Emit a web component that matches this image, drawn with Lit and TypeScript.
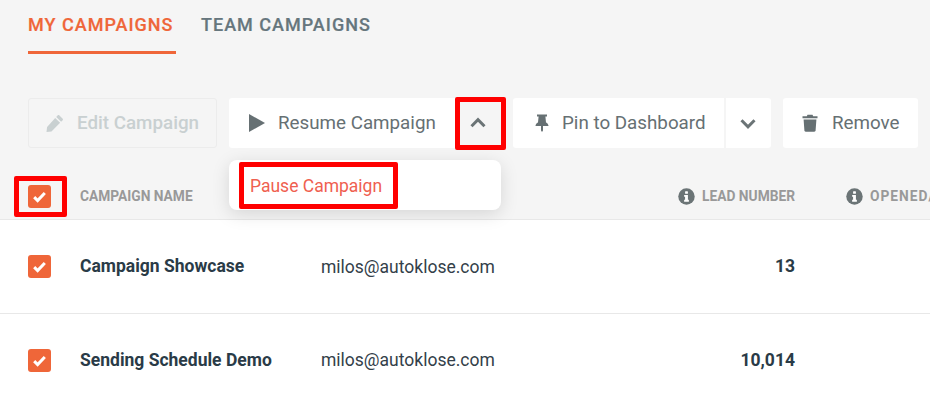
import { LitElement, html, css } from "lit";
import { customElement } from "lit/decorators.js";

const check = html`<span class="cb"><svg viewBox="0 0 24 24" width="15" height="15"><path d="M3.500 13 9 18.500 20.500 6.500" fill="none" stroke="#fff" stroke-width="4.800"/></svg></span>`;
const info = html`<svg class="info" viewBox="0 0 18 18" width="17" height="17"><circle cx="9" cy="9" r="8.700" fill="#6b7476"/><rect x="7.500" y="3.400" width="3" height="2.700" rx=".6" fill="#fff"/><path d="M6.500 7.300h4v5.200h1v2H6.500v-2h1V9.300h-1z" fill="#fff"/></svg>`;
const chevron = (up: boolean) => html`<svg viewBox="0 0 18 18" width="18" height="18"><path d="${up ? "M2.500 12.200 9 5.700 15.500 12.200" : "M2.500 6.300 9 12.800 15.500 6.300"}" fill="none" stroke="#6b7476" stroke-width="3"/></svg>`;

@customElement("app-root")
export class AppRoot extends LitElement {
  static styles = css`
    :host { display: block; width: 930px; height: 406px; overflow: hidden; background: #f5f5f5; font-family: Roboto, sans-serif; }
    .tabs { display: flex; gap: 25px; padding-left: 28px; height: 54px; }
    .tab { font-size: 18px; font-weight: 500; letter-spacing: 1px; color: #66767d; line-height: 50px; height: 51px; white-space: nowrap; -webkit-text-stroke: .2px currentColor; }
    .tab.active { color: #ef6639; border-bottom: 3px solid #ef6639; width: 148px; }
    .bar { display: flex; margin: 44px 0 0 28px; height: 50px; }
    .btn { display: flex; align-items: center; background: #fff; border-radius: 3px; height: 50px; box-sizing: border-box; padding-bottom: 1px; font-size: 18.800px; color: #667073; white-space: nowrap; }
    .btn svg { flex: none; }
    .edit { width: 189px; margin-right: 12px; background: transparent; border: 1px solid #ececec; color: #c9d0d1; padding-left: 17px; gap: 13px; font-weight: 500; }
    .resume { width: 227px; padding-left: 19px; gap: 12px; border-radius: 3px 0 0 3px; }
    .caret-wrap { width: 50px; justify-content: center; padding-right: 6px; border-radius: 0; margin-right: 7px; background: transparent; position: relative; }
    .pin { width: 211px; padding-left: 20px; gap: 11px; margin-right: 2px; border-radius: 3px 0 0 3px; }
    .caret { width: 45px; justify-content: center; padding-right: 2px; margin-right: 12px; border-radius: 0 3px 3px 0; }
    .remove { width: 135px; padding-left: 18px; gap: 13px; }
    .mark { position: absolute; border: 5px solid #f00; border-radius: 2px; box-sizing: border-box; pointer-events: none; }
    .mark.caret-mark { left: -1px; top: -1px; width: 51px; height: 53px; }
    .table-area { position: relative; margin-top: 12px; }
    .row { display: grid; grid-template-columns: 23px 28px 242px 474px 51px 1fr; align-items: center; padding-left: 28px; }
    .head { height: 48px; padding-bottom: 11px; align-items: end; border-bottom: 1px solid #e8e8e8; font-size: 13.750px; line-height: 23px; font-weight: 700; color: #999; white-space: nowrap; }
    .cb-cell { grid-column: 1; position: relative; height: 23px; }
    .mark.cb-mark { left: -14px; top: -9px; width: 53px; height: 41px; }
    .name { grid-column: 3; padding-left: 1px; }
    .num-h { grid-column: 4; display: flex; align-items: center; justify-content: flex-end; gap: 7px; }
    .opened { grid-column: 6; display: flex; align-items: center; gap: 7px; letter-spacing: 1px; }
    .info { flex: none; }
    .dropdown { position: absolute; left: 229px; top: 0; width: 272px; height: 50px; background: #fff; border-radius: 8px; box-shadow: 0 4px 18px rgba(0,0,0,.13); z-index: 2; display: flex; align-items: center; padding-left: 21px; padding-top: 1px; box-sizing: border-box; font-size: 17.500px; color: #ef6050; }
    .dropdown .mark { left: 10px; top: 2px; width: 159px; height: 47px; }
    .cb { display: flex; width: 23px; height: 23px; border-radius: 3px; background: #ef6639; align-items: center; justify-content: center; }
    .data { background: #fff; height: 94px; border-bottom: 1px solid #e8e8e8; box-sizing: border-box; font-size: 17.500px; color: #334049; }
    .data.last { border-bottom: 0; height: 92px; }
    .data .cb { grid-column: 1; }
    .title { grid-column: 2 / 4; padding-left: 29px; margin-bottom: 1px; font-weight: 700; color: #2a3b47; white-space: nowrap; }
    .mail { grid-column: 4; white-space: nowrap; }
    .n { grid-column: 4; text-align: right; margin-bottom: 1px; font-weight: 700; color: #2a3b47; }
    .data > * { grid-row: 1; }
  `;

  render() {
    const row = (title: string, n: string, last = false) => html`
      <div class="row data ${last ? "last" : ""}">
        ${check}
        <span class="title">${title}</span>
        <span class="mail">milos@autoklose.com</span>
        <span class="n">${n}</span>
      </div>`;
    return html`
      <div class="tabs">
        <div class="tab active">MY CAMPAIGNS</div>
        <div class="tab">TEAM CAMPAIGNS</div>
      </div>
      <div class="bar">
        <div class="btn edit">
          <svg viewBox="0 0 18 18" width="18" height="18"><path d="M13.200 1.300l3.500 3.500c.4.4.4 1 0 1.400l-1.600 1.600-4.900-4.900 1.600-1.600c.4-.4 1-.4 1.400 0zM9.200 3.900l4.900 4.900-8.600 8.600-5 .6.6-5z" fill="#c9d0d1"/></svg>
          Edit Campaign
        </div>
        <div class="btn resume">
          <svg viewBox="0 0 18 18" width="18" height="18"><path d="M1 0 17 9 1 18z" fill="#667073"/></svg>
          Resume Campaign
        </div>
        <div class="btn caret-wrap">${chevron(true)}<span class="mark caret-mark"></span></div>
        <div class="btn pin">
          <svg viewBox="0 0 18 18" width="18" height="18"><path d="M4 .5h10v2h-1.600l.6 6c1.500.7 2.500 1.900 2.500 3.500H10v4.500L9 18l-1-1.500V12H2.500c0-1.600 1-2.800 2.500-3.500l.6-6H4z" fill="#667073"/></svg>
          Pin to Dashboard
        </div>
        <div class="btn caret">${chevron(false)}</div>
        <div class="btn remove">
          <svg viewBox="0 0 18 18" width="18" height="18"><path d="M6.500.8h5l.7 1.400H16.500v2h-15v-2h4.300zM2.600 5.400h12.800l-.8 11.100c0 .7-.6 1.200-1.300 1.200H4.700c-.7 0-1.300-.5-1.300-1.200z" fill="#667073"/></svg>
          Remove
        </div>
      </div>
      <div class="table-area">
        <div class="dropdown">Pause Campaign<span class="mark"></span></div>
        <div class="row head">
          <div class="cb-cell">${check}<span class="mark cb-mark"></span></div>
          <span class="name">CAMPAIGN NAME</span>
          <span class="num-h">${info}LEAD NUMBER</span>
          <span class="opened">${info}OPENED/</span>
        </div>
        ${row("Campaign Showcase", "13")}
        ${row("Sending Schedule Demo", "10,014", true)}
      </div>
    `;
  }
}
